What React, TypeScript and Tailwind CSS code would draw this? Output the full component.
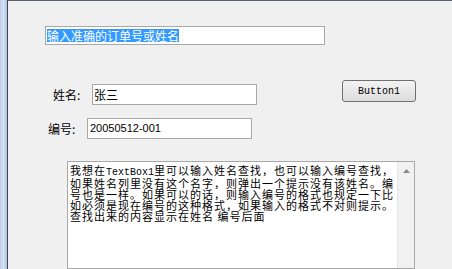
import React from "react";

const cjk = { fontFamily: '"Noto Sans CJK SC", "Noto Sans", sans-serif' };

export default function App() {
  const mono = { fontFamily: '"Liberation Mono", monospace' };
  const lines = [
    <>我想在<span className="text-[10px] tracking-normal" style={mono}>TextBox1</span>里可以输入姓名查找，也可以输入编号查找，</>,
    <>如果姓名列里没有这个名字，则弹出一个提示没有该姓名。编</>,
    <>号也是一样。如果可以的话，则输入编号的格式也规定一下比</>,
    <>如必须是现在编号的这种格式，如果输入的格式不对则提示。</>,
    <>查找出来的内容显示在姓名 编号后面</>,
  ];
  return (
    <div className="flex h-[269px] w-[452px] overflow-hidden bg-[#f0f0f0]" style={cjk}>
      <div className="w-[8px] shrink-0 border-r border-[#3c4450] bg-gradient-to-r from-[#b9cde8] via-[#d6e3f4] to-[#a9c2e4]" />
      <div className="flex flex-1 flex-col border-t border-[#5a6370] bg-[#f0f0f0]">
        {/* top textbox */}
        <div className="ml-[37px] mt-[25px] flex h-[21px] w-[280px] items-center border border-[#a8a8a8] bg-white pl-[1px]">
          <span className="bg-[#3399ff] text-[12px] leading-[13px] text-white">输入准确的订单号或姓名</span>
        </div>
        {/* row name + button */}
        <div className="mt-[35px] flex items-start">
          <div className="ml-[45px] mt-[4px] flex items-center">
            <span className="w-[39px] text-[12px] leading-[14px] text-black">姓名:</span>
            <div className="flex h-[21px] w-[165px] items-center border border-[#a8a8a8] bg-white pl-[1px] text-[12px] text-black">张三</div>
          </div>
          <button className="ml-[85px] flex h-[22px] w-[74px] items-center justify-center rounded-[3px] border border-[#707070] bg-gradient-to-b from-[#f3f3f3] to-[#dddddd] text-[10px] text-black" style={mono}>
            Button1
          </button>
        </div>
        {/* row number */}
        <div className="ml-[40px] mt-[13px] flex items-center">
          <span className="w-[39px] text-[12px] leading-[14px] text-black">编号:</span>
          <div className="flex h-[21px] w-[165px] items-center border border-[#a8a8a8] bg-white pl-[2px] text-[11px] text-black" style={{ fontFamily: '"Liberation Sans", sans-serif' }}>
            20050512-001
          </div>
        </div>
        {/* textarea */}
        <div className="ml-[59px] mt-[22px] flex h-[120px] w-[348px] border border-[#a8a8a8] bg-white">
          <div className="flex-1 pl-[2px] pt-[3px] text-[11px] leading-[11px] tracking-[1px] text-black">
            {lines.map((l, i) => (
              <div key={i} className="whitespace-nowrap">{l}</div>
            ))}
          </div>
          <div className="flex w-[17px] flex-col items-center border-l border-[#e6e6e6] bg-[#f1f1f1] pt-[7px]">
            <svg width="7" height="4" viewBox="0 0 7 4"><polygon points="0,4 7,4 3.5,0" fill="#8a8a8a" /></svg>
          </div>
        </div>
      </div>
    </div>
  );
}
